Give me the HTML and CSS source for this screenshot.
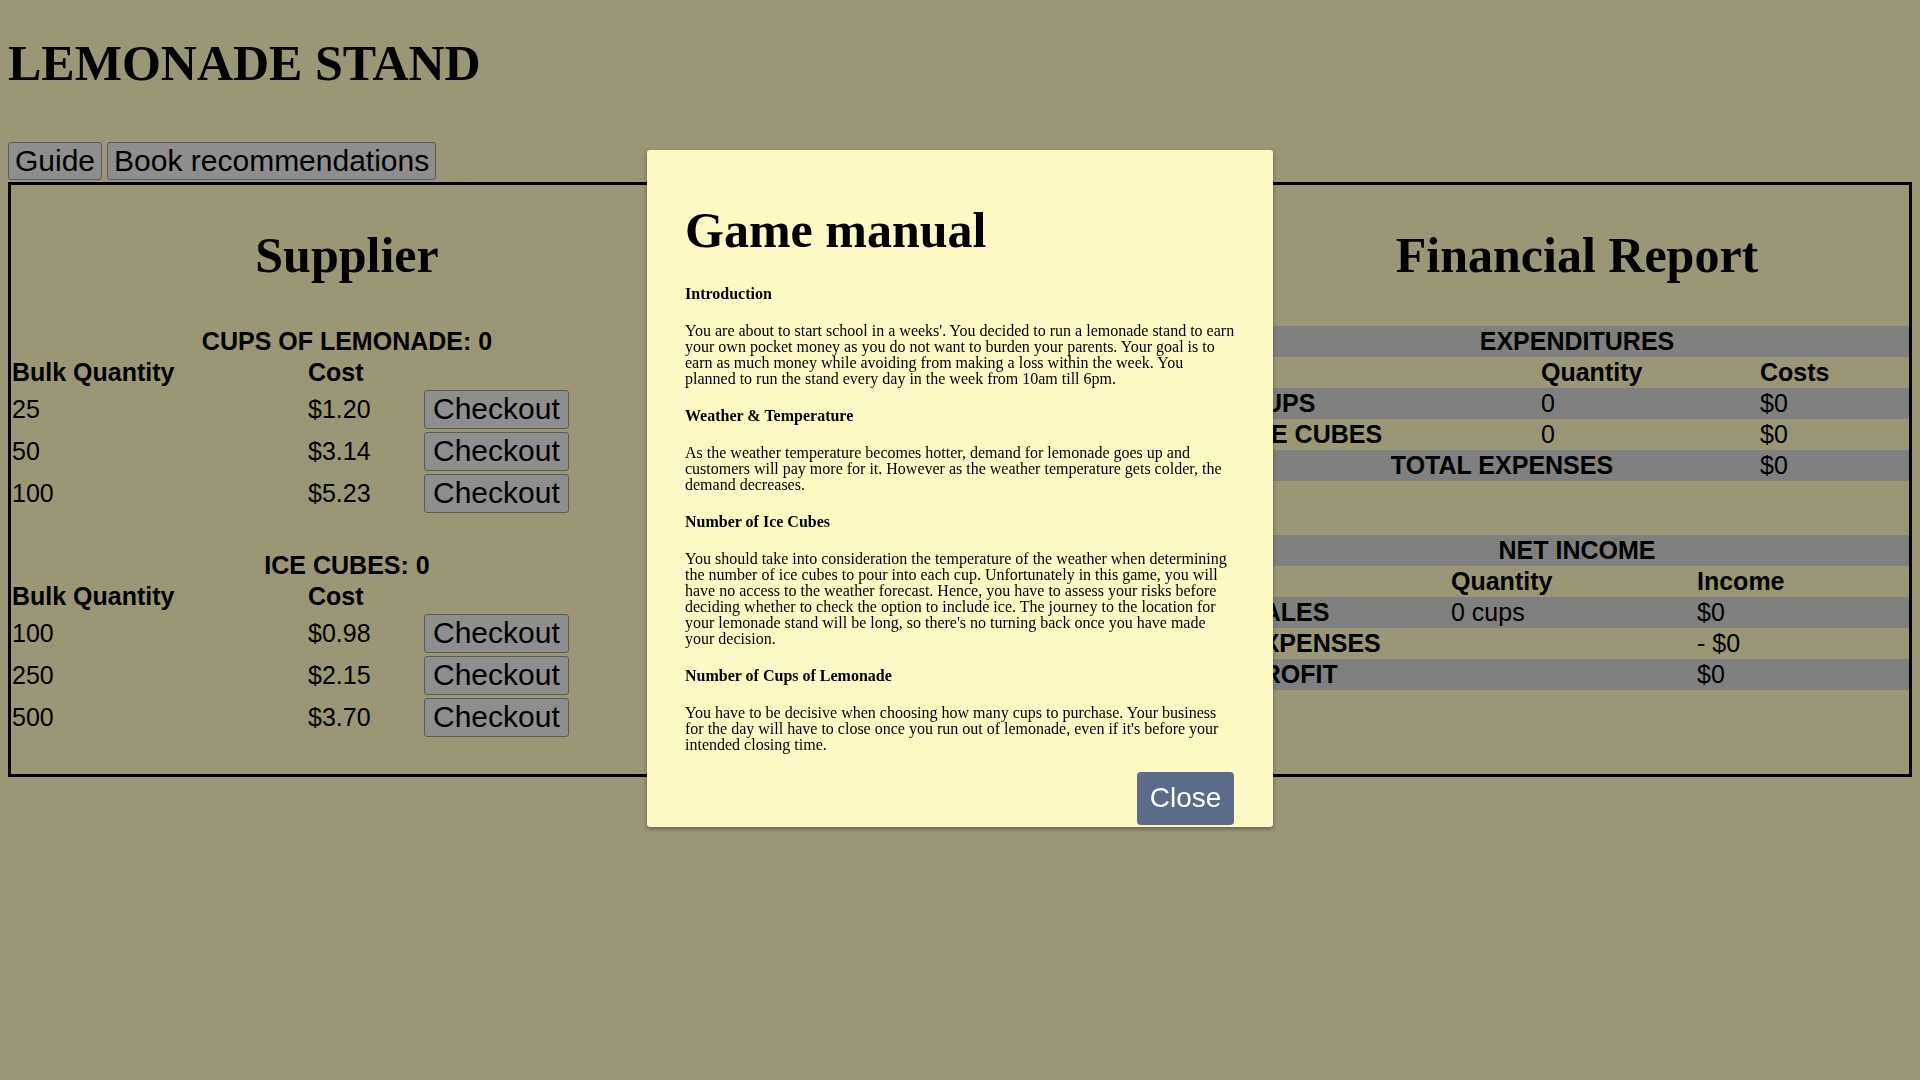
FILE: index.html
```html
<!DOCTYPE html>
<html lang="en">
<head>
<meta charset="utf-8">
<title>Lemonade Stand</title>
<link rel="stylesheet" href="styles.css">
</head>
<body>
<h1 class="title">LEMONADE STAND</h1>
<div class="tabs">
  <button class="btn">Guide</button>
  <button class="btn">Book recommendations</button>
</div>
<main class="board">
  <section class="col">
    <h1 class="col-title">Supplier</h1>
    <table class="supply">
      <colgroup><col class="s1"><col class="s2"><col></colgroup>
      <tr><th colspan="3" class="center">CUPS OF LEMONADE: 0</th></tr>
      <tr><th>Bulk Quantity</th><th>Cost</th><th></th></tr>
      <tr><td>25</td><td>$1.20</td><td><button class="btn checkout">Checkout</button></td></tr>
      <tr><td>50</td><td>$3.14</td><td><button class="btn checkout">Checkout</button></td></tr>
      <tr><td>100</td><td>$5.23</td><td><button class="btn checkout">Checkout</button></td></tr>
    </table>
    <table class="supply">
      <colgroup><col class="s1"><col class="s2"><col></colgroup>
      <tr><th colspan="3" class="center">ICE CUBES: 0</th></tr>
      <tr><th>Bulk Quantity</th><th>Cost</th><th></th></tr>
      <tr><td>100</td><td>$0.98</td><td><button class="btn checkout">Checkout</button></td></tr>
      <tr><td>250</td><td>$2.15</td><td><button class="btn checkout">Checkout</button></td></tr>
      <tr><td>500</td><td>$3.70</td><td><button class="btn checkout">Checkout</button></td></tr>
    </table>
  </section>
  <section class="col"></section>
  <section class="col">
    <h1 class="col-title">Financial Report</h1>
    <table class="report exp">
      <colgroup><col class="e1"><col class="e2"><col></colgroup>
      <tr><th colspan="3" class="center">EXPENDITURES</th></tr>
      <tr><th></th><th>Quantity</th><th>Costs</th></tr>
      <tr><th>CUPS</th><td>0</td><td>$0</td></tr>
      <tr><th>ICE CUBES</th><td>0</td><td>$0</td></tr>
      <tr><th colspan="2" class="center">TOTAL EXPENSES</th><td>$0</td></tr>
    </table>
    <table class="report net">
      <colgroup><col class="n1"><col class="n2"><col></colgroup>
      <tr><th colspan="3" class="center">NET INCOME</th></tr>
      <tr><th></th><th>Quantity</th><th>Income</th></tr>
      <tr><th>SALES</th><td>0 cups</td><td>$0</td></tr>
      <tr><th>EXPENSES</th><td></td><td>- $0</td></tr>
      <tr><th>PROFIT</th><td></td><td>$0</td></tr>
    </table>
  </section>
</main>

<div class="modal">
  <h1>Game manual</h1>
  <h4>Introduction</h4>
  <p>You are about to start school in a weeks'. You decided to run a lemonade stand to earn<br>your own pocket money as you do not want to burden your parents. Your goal is to<br>earn as much money while avoiding from making a loss within the week. You<br>planned to run the stand every day in the week from 10am till 6pm.</p>
  <h4>Weather &amp; Temperature</h4>
  <p>As the weather temperature becomes hotter, demand for lemonade goes up and<br>customers will pay more for it. However as the weather temperature gets colder, the<br>demand decreases.</p>
  <h4>Number of Ice Cubes</h4>
  <p>You should take into consideration the temperature of the weather when determining<br>the number of ice cubes to pour into each cup. Unfortunately in this game, you will<br>have no access to the weather forecast. Hence, you have to assess your risks before<br>deciding whether to check the option to include ice. The journey to the location for<br>your lemonade stand will be long, so there's no turning back once you have made<br>your decision.</p>
  <h4>Number of Cups of Lemonade</h4>
  <p>You have to be decisive when choosing how many cups to purchase. Your business<br>for the day will have to close once you run out of lemonade, even if it's before your<br>intended closing time.</p>
  <div class="modal-foot"><button class="close">Close</button></div>
</div>
</body>
</html>
```

FILE: styles.css
```css
body {
  margin: 8px;
  background: #9a9676;
  color: #000;
  font-family: "Liberation Sans", Arial, sans-serif;
}

.title {
  font: bold 50px/50px "Liberation Serif", "Times New Roman", serif;
  margin: 30px 0 54px;
}

.tabs {
  display: flex;
  gap: 5px;
  align-items: flex-start;
  height: 40px;
}

.btn {
  font: 30px "Liberation Sans", Arial, sans-serif;
  padding: 1px 6px;
  border: 1px solid #5a5a5a;
  border-radius: 3px;
  background: #8e8e8e;
  color: #000;
}

.board {
  border: 3px solid #000;
  display: grid;
  grid-template-columns: 672px 1fr 664px;
}

.col-title {
  font: bold 50px/50px "Liberation Serif", "Times New Roman", serif;
  text-align: center;
  margin: 45px 0 46px;
}

table {
  border-collapse: collapse;
  table-layout: fixed;
  width: 100%;
  font-size: 25px;
  line-height: 29px;
}

th, td {
  padding: 1px;
  text-align: left;
}

th.center { text-align: center; }

.s1 { width: 296px; }
.s2 { width: 116px; }

.supply { margin-bottom: 35.4px; }

.checkout {
  display: block;
  height: 39px;
  margin: 0.6px 0;
  padding: 0 8px;
}

.e1 { width: 295px; }
.e2 { width: 219px; }
.n1 { width: 205px; }
.n2 { width: 246px; }

.report tr:nth-child(odd) { background: #808080; }

.exp { margin-bottom: 54px; }

.modal {
  position: fixed;
  top: 150px;
  left: 647px;
  width: 626px;
  box-sizing: border-box;
  padding: 54.8px 39px 2.4px 38px;
  background: #fef8c5;
  border-radius: 3px;
  box-shadow: 0 2px 4px rgba(0, 0, 0, 0.35);
  font-family: "Liberation Serif", "Times New Roman", serif;
}

.modal h1 {
  font: bold 50px/50px "Liberation Serif", "Times New Roman", serif;
  margin: 0 0 31px;
}

.modal h4 {
  font-size: 16px;
  line-height: 16px;
  margin: 21px 0;
}

.modal p {
  font-size: 16px;
  line-height: 16px;
  margin: 16px 0;
  white-space: nowrap;
}

.modal-foot {
  display: flex;
  justify-content: flex-end;
  margin-top: 19px;
}

.close {
  font: 28px/32px "Liberation Sans", Arial, sans-serif;
  color: #fff;
  background: #5c6b8a;
  border: 0;
  border-radius: 4px;
  padding: 10.5px 12.7px;
}
```
